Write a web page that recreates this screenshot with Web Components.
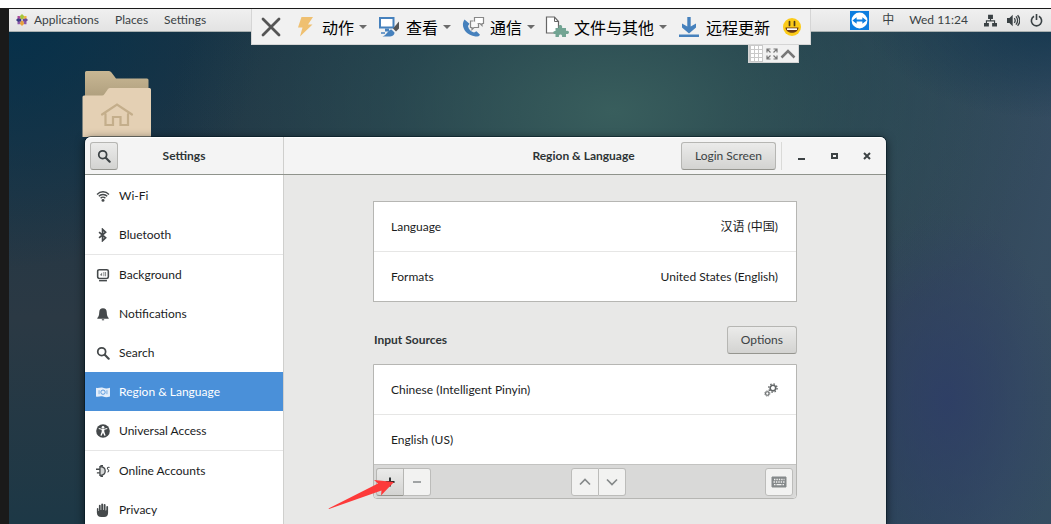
<!DOCTYPE html>
<html lang="en">
<head>
<meta charset="utf-8">
<title>Settings</title>
<style>
  body {
    margin: 0;
    background: #ffffff;
    font-family: Lato, "Noto Sans CJK SC", sans-serif;
    font-size: 12px;
    line-height: 16px;
    color: #1c1f20;
  }
</style>
</head>
<body>
<x-desktop></x-desktop>

<script>
const ICONS = {
  search: `<svg viewBox="0 0 16 16"><circle cx="6.5" cy="6.5" r="4.500" fill="none" stroke="currentColor" stroke-width="2"/><path d="M10 10l4.500 4.500" stroke="currentColor" stroke-width="2.400" stroke-linecap="round"/></svg>`,
  wifi: `<svg viewBox="0 0 16 16" fill="none" stroke="currentColor" stroke-width="1.6"><path d="M1.2 6.2c3.8-4 9.8-4 13.6 0"/><path d="M3.2 8.4c2.7-2.8 6.900-2.800 9.600 0"/><path d="M5.300 10.500c1.500-1.600 3.900-1.600 5.400 0"/><circle cx="8" cy="13" r="1.700" fill="currentColor" stroke="none"/></svg>`,
  bluetooth: `<svg viewBox="0 0 16 16" fill="none" stroke="currentColor" stroke-width="1.900"><path d="M3.500 4.800l7.500 6.400L7.500 14.500v-13L11 4.800 3.500 11.200"/></svg>`,
  background: `<svg viewBox="0 0 16 16"><rect x="1.900" y="1.900" width="12.200" height="10" rx="1.800" fill="none" stroke="currentColor" stroke-width="1.800"/><path d="M4.500 8l2.500-3v4zM8.500 4.500h1v5h-1zM10.500 4.500h1v5h-1z" fill="currentColor" opacity=".75"/><path d="M3.500 14.500h9" stroke="currentColor" stroke-width="1.600"/></svg>`,
  bell: `<svg viewBox="0 0 16 16" fill="currentColor"><path d="M8 1.500c-2.800 0-4.200 1.900-4.300 4.500-.1 3.500-.7 5-2.200 6.500v1h13v-1c-1.500-1.500-2.100-3-2.200-6.500C12.200 3.400 10.800 1.500 8 1.500z"/><path d="M6.700 14h2.600v1.200H6.700z"/></svg>`,
  region: `<svg viewBox="0 0 16 16"><path d="M0 3.200c3 1 5-1 8 0s5 .8 8 0v10c-3 .8-5 1-8 0s-5 .8-8 0z" fill="currentColor" opacity=".85"/><circle cx="8" cy="8.200" r="2.500" fill="none" stroke="#4a90d9" stroke-width="1"/><path d="M3.500 6v4.500M12.500 6v4.500" stroke="#4a90d9" stroke-width=".8"/></svg>`,
  access: `<svg viewBox="0 0 16 16"><circle cx="8" cy="8" r="7.800" fill="currentColor"/><circle cx="8" cy="3.700" r="1.500" fill="#fff"/><path d="M3 5.700l3.500.9v2.200L5 13l1.400.5L8 10l1.600 3.500L11 13 9.500 8.800V6.600l3.500-.9-.3-1-3.200.8h-3L3.300 4.700z" fill="#fff"/></svg>`,
  accounts: `<svg viewBox="0 0 16 16" fill="none" stroke="currentColor"><path d="M4.500 3v10c4 0 6-2 6-5s-2-5-6-5z" fill="#d4d6d6" stroke-width="1.500"/><path d="M0 6h4.500M1 10.200h3.500M5 2h3M5 14h3" stroke-width="1.500"/><path d="M15.500 4c-2-.8-3.200.8-2 2s2 2-.3 3.500" stroke-width="1.200"/></svg>`,
  hand: `<svg viewBox="0 0 16 16" fill="currentColor"><path d="M1 6.500c0-1 1.700-1 1.700 0V9h.6V2.800c0-1.200 2-1.200 2 0V8h.7V1.500c0-1.200 2.100-1.200 2.100 0V8h.7V2c0-1.200 2.100-1.200 2.100 0v6.500h.7l.2-1V4.300c0-1.100 2-1.100 2 0V11c0 3-1.500 5-4.500 5H6c-3 0-5-2-5-5z"/></svg>`,
  gears: `<svg viewBox="0 0 16 16" fill="none" stroke="currentColor"><circle cx="10.200" cy="5.800" r="3.200" stroke-width="1.800"/><circle cx="10.200" cy="5.800" r="4.800" stroke-width="1.500" stroke-dasharray="1.700 2.070"/><circle cx="3.800" cy="12" r="2" stroke-width="1.300"/><circle cx="3.800" cy="12" r="3" stroke-width="1" stroke-dasharray="1.200 1.150"/></svg>`,
  keyboard: `<svg viewBox="0 0 16 16"><path d="M1 3h14v10H1z" fill="#85898a" stroke="currentColor"/><path d="M3 5.500h10.500M2.500 8h11" stroke="#f2f2f1" stroke-width="1.300" stroke-dasharray="1.400 1"/><path d="M3 10.700h1.500M5.500 10.700h5M11.500 10.700h1.500" stroke="#f2f2f1" stroke-width="1.300"/></svg>`,
  plus: `<svg viewBox="0 0 16 16"><path d="M8 3.500v9M3.500 8h9" stroke="currentColor" stroke-width="1.800"/></svg>`,
  minus: `<svg viewBox="0 0 16 16"><path d="M4 8h8" stroke="currentColor" stroke-width="1.500"/></svg>`,
  up: `<svg viewBox="0 0 16 16"><path d="M3 10.500L8 5.500l5 5" fill="none" stroke="currentColor" stroke-width="1.700"/></svg>`,
  down: `<svg viewBox="0 0 16 16"><path d="M3 5.500l5 5 5-5" fill="none" stroke="currentColor" stroke-width="1.700"/></svg>`,
  minimize: `<svg viewBox="0 0 16 16"><path d="M5 11h7" stroke="currentColor" stroke-width="2"/></svg>`,
  maximize: `<svg viewBox="0 0 16 16"><path d="M6 6h5v4H6z" fill="none" stroke="currentColor" stroke-width="2"/></svg>`,
  close: `<svg viewBox="0 0 16 16"><path d="M5 5l6 6M11 5l-6 6" stroke="currentColor" stroke-width="2"/></svg>`,
  apps: `<svg viewBox="0 0 16 16"><path d="M8 0l3 3-1.500 4h-3L5 3z" fill="#a5c63b"/><path d="M16 8l-3 3-4-1.500v-3L13 5z" fill="#6b4a9a"/><path d="M8 16l-3-3 1.500-4h3l1.500 4z" fill="#e8a33d"/><path d="M0 8l3-3 4 1.500v3L3 11z" fill="#3c3a86"/><path d="M11 2.500h3v3l-4 1z" fill="#f0b240"/><path d="M2 2.500h3l1 4-4-1z" fill="#a94a97"/><path d="M2 13.500v-3l4-1-1 4zM14 13.500h-3l-1-4 4 1z" fill="#8a57a8"/></svg>`,
  network: `<svg viewBox="0 0 16 16" fill="currentColor"><path d="M5 1h6v5H5zM0 11h6v4.500H0zM10 11h6v4.500h-6z"/><path d="M8 6v2.500M3 11.500v-3h10v3" fill="none" stroke="currentColor" stroke-width="1.400"/></svg>`,
  volume: `<svg viewBox="0 0 16 16"><path d="M0 5h3l4-4v14l-4-4H0z" fill="currentColor"/><path d="M9 5c1.300 1.800 1.300 4.200 0 6M11 3c2.500 3 2.500 7 0 10M13 1.500c3.500 4 3.500 9 0 13" fill="none" stroke="currentColor" stroke-width="1.600"/></svg>`,
  power: `<svg viewBox="0 0 16 16" fill="none" stroke="currentColor" stroke-width="2"><path d="M5 2.800a6.300 6.300 0 1 0 6 0M8 0v7.500"/></svg>`,
  teamviewer: `<svg viewBox="0 0 18 18"><path d="M0 0h18v18H0z" fill="#0d7ddf"/><circle cx="9" cy="9" r="7.500" fill="#fff"/><path d="M2.300 9l4-3v2h5.400V6l4 3-4 3v-2H6.300v2z" fill="#0d7ddf"/></svg>`,
  cross: `<svg viewBox="0 0 24 24"><path d="M4 4l16 16M20 4L4 20" stroke="#555" stroke-width="2.800" stroke-linecap="round"/></svg>`,
  bolt: `<svg viewBox="0 0 24 24"><path d="M8.500 2H20l-5 7.500h4.500L7 21.500l2.500-9H5z" fill="#efc071"/></svg>`,
  screen: `<svg viewBox="0 0 24 24"><path d="M3 3h13.500v9.500H3z" fill="#fff" stroke="#4681bd" stroke-width="2"/><path d="M8 13.500h4v3H8z" fill="#4681bd"/><path d="M4 18h4" stroke="#4681bd" stroke-width="1.500"/><path d="M22 6.500v7l-3 3-3-3z" fill="#555"/><path d="M14.500 14.500l3 3c0 3-3 4.500-7 4H5.500c2.500-1 3-2 4.500-3.500s2.500-3.500 4.500-3.500z" fill="#4681bd"/></svg>`,
  phone: `<svg viewBox="0 0 24 24"><path d="M3.500 4.500C-.500 10 3 20 14.500 21.500c2.500 0 4-.500 4.500-1.800l-3.500-3.400-2.500 1.200c-3.500-.700-5.500-3.500-6-6.500l1.500-2.200z" fill="#4681bd"/><path d="M13.500 2.500h9V8.500h-1.500v2L19 8.500h-5.500z" fill="#fff" stroke="#888" stroke-width="1.200"/><path d="M12.500 6h-3v6.500h1.500v2l2-2h4.500V9" fill="#f8f8f8" stroke="#888" stroke-width="1.200"/></svg>`,
  files: `<svg viewBox="0 0 24 24"><path d="M1.500 2h8l4 4.500V18h-12z" fill="#fff" stroke="#666" stroke-width="1.200"/><path d="M9.500 2v4.500h4" fill="none" stroke="#666"/><path d="M10.500 13h3.200c-1.500-4 4.600-4 3.300 0h4v3c4-1.500 4 4 0 3v3h-4c1-3.500-4-3.500-3 0h-3.500v-3c-3 .5-3-3.500 0-3z" fill="#72a493"/></svg>`,
  download: `<svg viewBox="0 0 24 24" fill="#4681bd"><path d="M10.300 2h3.400v9.500l5.300-3v4L12 18.500 5 12.500v-4l5.300 3zM2 19.500h20V22H2z"/></svg>`,
  smiley: `<svg viewBox="0 0 24 24"><circle cx="12" cy="12" r="9" fill="#fccb18"/><path d="M9.500 6.500v4M14.500 6.500v4" stroke="#4b3a1a" stroke-width="1.700" stroke-linecap="round"/><path d="M5.500 12.500h13c-.5 7-12.500 7-13 0z" fill="#6a3a17"/><path d="M7 13.300h10v1.700H7z" fill="#fff"/></svg>`,
  grip: `<svg viewBox="0 0 14 17"><path d="M0 0h14v17H0z" fill="#c9c9c9"/><path d="M3.500 1v16M7.500 1v16M11.500 1v16" stroke="#fff" stroke-width="3" stroke-dasharray="3 1"/></svg>`,
  expand: `<svg viewBox="0 0 16 16" fill="none" stroke="#777" stroke-width="1.200"><path d="M3 6.500V3h3.500M3 3l3.500 3.500M9.500 3H13v3.500M13 3L9.500 6.500M3 9.500V13h3.500M3 13l3.500-3.500M13 9.500V13H9.500M13 13L9.500 9.500"/></svg>`,
  chevron: `<svg viewBox="0 0 16 16"><path d="M1.500 11.500L8 5l6.500 6.500" fill="none" stroke="#777" stroke-width="2.500"/></svg>`,
};

class XIcon extends HTMLElement {
  constructor() {
    super();
    this.attachShadow({ mode: "open" });
  }

  connectedCallback() {
    this.shadowRoot.innerHTML = `
      <style>
        :host { display: block; flex: none; width: var(--icon-size, 16px); height: var(--icon-size, 16px); }
        svg { display: block; width: 100%; height: 100%; }
      </style>
      ${ICONS[this.getAttribute("name")] || ""}
    `;
  }
}
customElements.define("x-icon", XIcon);

// registers an element whose shadow root is a clone of the given markup
function define(name, html) {
  const template = document.createElement("template");
  template.innerHTML = html;

  customElements.define(name, class extends HTMLElement {
    constructor() {
      super();
      this.attachShadow({ mode: "open" });
      this.shadowRoot.appendChild(template.content.cloneNode(true));
      const button = this.shadowRoot.querySelector("button, a");
      if (button && this.getAttribute("label")) {
        button.setAttribute("aria-label", this.getAttribute("label"));
      }
    }
  });
}

define("x-button", `
  <style>
    :host { display: block; flex: none; }
    button {
      box-sizing: border-box;
      display: flex;
      align-items: center;
      justify-content: center;
      min-width: 28px;
      height: 28px;
      margin: 0;
      padding: 0 var(--button-padding, 5px);
      border: 1px solid #b6b6b3;
      border-bottom-color: #95958f;
      border-radius: var(--button-radius, 3px);
      background: linear-gradient(#ebebea, #d3d3d1);
      font: inherit;
      color: var(--button-color, #3c4244);
    }
    :host([flat]) button { background: #f2f2f1; border-color: #bcbcba; }
    :host([joined]) button { border-left: 0; min-width: 27px; }
    :host([window]) button { background: none; border: 0; min-width: 33px; padding: 0; }
  </style>
  <button type="button"><slot></slot></button>
`);

define("x-menu-button", `
  <style>
    :host { display: block; }
    button {
      display: flex;
      align-items: center;
      height: var(--menu-height, 22px);
      margin: 0;
      padding: 0;
      border: 0;
      background: none;
      font: inherit;
      color: inherit;
      white-space: nowrap;
    }
  </style>
  <button type="button"><slot></slot></button>
`);

define("x-top-bar", `
  <style>
    :host {
      display: flex;
      align-items: center;
      justify-content: space-between;
      height: 22px;
      padding: 0 8px 0 7px;
      border-bottom: 1px solid #a9b0b0;
      background: linear-gradient(#f0f0f0, #e3e3e3);
      color: #3a4144;
    }
    nav, .status { display: flex; align-items: center; }
    nav { gap: 16px; }
    .apps { --icon-size: 12px; margin-right: 6px; }
    .status { gap: 10px; --icon-size: 13px; }
    .tv { --icon-size: 19px; }
    .clock { margin: 0 6px 0 5px; }
    .input { margin-left: 3px; }
  </style>
  <nav>
    <x-menu-button><x-icon class="apps" name="apps"></x-icon>Applications</x-menu-button>
    <x-menu-button>Places</x-menu-button>
    <x-menu-button>Settings</x-menu-button>
  </nav>
  <div class="status">
    <x-menu-button label="TeamViewer"><x-icon class="tv" name="teamviewer"></x-icon></x-menu-button>
    <x-menu-button class="input">中</x-menu-button>
    <x-menu-button class="clock">Wed 11:24</x-menu-button>
    <x-menu-button label="Network"><x-icon name="network"></x-icon></x-menu-button>
    <x-menu-button label="Volume"><x-icon name="volume"></x-icon></x-menu-button>
    <x-menu-button label="Power"><x-icon name="power"></x-icon></x-menu-button>
  </div>
`);

define("x-remote-item", `
  <style>
    :host { display: block; --icon-size: 24px; }
    button {
      display: flex;
      align-items: center;
      gap: 5px;
      height: 35px;
      margin: 0;
      padding: 0;
      border: 0;
      background: none;
      font: inherit;
      color: #000000;
      white-space: nowrap;
    }
    :host([menu]) button::after {
      content: "";
      border: 4px solid transparent;
      border-top-color: #6b6b6b;
      border-bottom: 0;
    }
  </style>
  <button type="button"><slot></slot></button>
`);

define("x-remote-bar", `
  <style>
    :host {
      display: flex;
      flex-direction: column;
      align-items: flex-end;
      font-family: "Noto Sans CJK SC", sans-serif;
      font-size: 16px;
      line-height: 24px;
    }
    .bar {
      display: flex;
      gap: 10px;
      padding: 0 6px 0 7px;
      border: 1px solid #d5d5d5;
      border-top: 0;
      background: #f1f1f1;
    }
    .tab {
      display: flex;
      align-items: center;
      height: 17px;
      margin-right: 12px;
      padding-right: 2px;
      border: 1px solid #d5d5d5;
      border-top: 0;
      background: #f1f1f1;
      --menu-height: 17px;
    }
    .grip { width: 14px; height: 17px; }
    .expand { margin-left: 1px; }
  </style>
  <div class="bar">
    <x-remote-item label="关闭"><x-icon name="cross"></x-icon></x-remote-item>
    <x-remote-item menu><x-icon name="bolt"></x-icon>动作</x-remote-item>
    <x-remote-item menu><x-icon name="screen"></x-icon>查看</x-remote-item>
    <x-remote-item menu><x-icon name="phone"></x-icon>通信</x-remote-item>
    <x-remote-item menu><x-icon name="files"></x-icon>文件与其他</x-remote-item>
    <x-remote-item><x-icon name="download"></x-icon>远程更新</x-remote-item>
    <x-remote-item label="反馈"><x-icon name="smiley"></x-icon></x-remote-item>
  </div>
  <div class="tab">
    <x-icon class="grip" name="grip"></x-icon>
    <x-menu-button class="expand" label="全屏"><x-icon name="expand"></x-icon></x-menu-button>
    <x-menu-button label="收起"><x-icon name="chevron"></x-icon></x-menu-button>
  </div>
`);

define("x-home-folder", `
  <style>
    :host { display: block; width: 70px; }
    svg { display: block; width: 100%; }
  </style>
  <svg viewBox="0 0 70 66" role="img" aria-label="Home">
    <defs>
      <linearGradient id="back" x1="0" y1="0" x2="0" y2="1">
        <stop offset="0" stop-color="#c8b794"/>
        <stop offset="1" stop-color="#a89877"/>
      </linearGradient>
    </defs>
    <path d="M3 1.500q0-1.500 1.500-1.500H27q1.500 0 2.500 1.500L34 7.500h31q1.500 0 1.500 1.500v25H3z" fill="url(#back)"/>
    <path d="M.5 26q0-1.500 1.500-1.500h18q1.500 0 2.500-1.500L26 18q.8-1 2-1h39.500q1.500 0 1.500 1.500V66H.5z" fill="#e4d0b4"/>
    <path d="M20 43.500l15-10 15 10M23.500 43v11H31v-8h7.500v8H46V43" fill="none" stroke="#c4ae8b" stroke-width="2.200" stroke-linecap="round"/>
  </svg>
`);

define("x-header-bar", `
  <style>
    :host {
      display: flex;
      flex: none;
      height: 37px;
      border-bottom: 1px solid #8f938c;
      border-radius: 6px 6px 0 0;
      background: #f4f4f4;
      box-shadow: inset 0 1px #ffffff;
    }
    h1, h2 {
      margin: 0;
      font-size: 12px;
      font-weight: 700;
      line-height: 16px;
      color: #2e3436;
      white-space: nowrap;
    }
    .side, .main { display: grid; align-items: center; }
    .side {
      box-sizing: border-box;
      flex: none;
      width: 199px;
      grid-template-columns: 28px 1fr 28px;
      padding: 0 5px;
      border-right: 1px solid #cfcfcd;
      text-align: center;
    }
    .side x-icon { --icon-size: 14px; }
    .main { flex: 1; grid-template-columns: 1fr auto 1fr; padding-right: 3px; }
    .main h1 { grid-column: 2; }
    .controls { display: flex; justify-content: flex-end; align-items: center; color: #1e2426; }
    .login { --button-padding: 13px; }
    .line { width: 1px; height: 28px; margin: 0 2px 0 5px; background: #dadad8; }
  </style>
  <div class="side">
    <x-button label="Search"><x-icon name="search"></x-icon></x-button>
    <h2>Settings</h2>
  </div>
  <div class="main">
    <h1>Region &amp; Language</h1>
    <div class="controls">
      <x-button class="login">Login Screen</x-button>
      <span class="line"></span>
      <x-button window label="Minimize"><x-icon name="minimize"></x-icon></x-button>
      <x-button window label="Maximize"><x-icon name="maximize"></x-icon></x-button>
      <x-button window label="Close"><x-icon name="close"></x-icon></x-button>
    </div>
  </div>
`);

define("x-side-item", `
  <style>
    :host { display: block; }
    :host([first]) { border-top: 1px solid #e6e6e6; }
    a {
      display: flex;
      align-items: center;
      gap: 9px;
      height: 39px;
      padding-left: 11px;
      color: #1a1c1d;
      text-decoration: none;
    }
    ::slotted(x-icon) { --icon-size: 14px; color: #45494b; }
    :host([selected]) a { background: #4a90d9; color: #ffffff; }
    :host([selected]) ::slotted(x-icon) { color: #ffffff; }
  </style>
  <a href="#"><slot></slot></a>
`);

define("x-side-bar", `
  <style>
    :host { display: block; padding-top: 1px; background: #ffffff; border-right: 1px solid #cfcfcd; }
  </style>
  <nav>
    <x-side-item><x-icon name="wifi"></x-icon>Wi-Fi</x-side-item>
    <x-side-item><x-icon name="bluetooth"></x-icon>Bluetooth</x-side-item>
    <x-side-item first><x-icon name="background"></x-icon>Background</x-side-item>
    <x-side-item><x-icon name="bell"></x-icon>Notifications</x-side-item>
    <x-side-item><x-icon name="search"></x-icon>Search</x-side-item>
    <x-side-item selected><x-icon name="region"></x-icon>Region &amp; Language</x-side-item>
    <x-side-item><x-icon name="access"></x-icon>Universal Access</x-side-item>
    <x-side-item first><x-icon name="accounts"></x-icon>Online Accounts</x-side-item>
    <x-side-item><x-icon name="hand"></x-icon>Privacy</x-side-item>
  </nav>
`);

define("x-list", `
  <style>
    :host { display: block; border: 1px solid #b6b6b3; background: #ffffff; }
    :host([toolbar]) { border-radius: 0 0 4px 4px; }
  </style>
  <slot></slot>
`);

define("x-row", `
  <style>
    :host { display: block; }
    :host([next]) { border-top: 1px solid #e6e6e5; }
    button {
      display: flex;
      align-items: center;
      justify-content: space-between;
      width: 100%;
      height: 49px;
      margin: 0;
      padding: 0 18px 0 17px;
      border: 0;
      background: none;
      font: inherit;
      color: #1a1c1d;
    }
  </style>
  <button type="button"><slot></slot><slot name="end"></slot></button>
`);

define("x-source-tools", `
  <style>
    :host {
      position: relative;
      display: flex;
      align-items: center;
      justify-content: space-between;
      height: 33px;
      padding: 0 3px 0 2px;
      border-top: 1px solid #c3c3c1;
      border-radius: 0 0 4px 4px;
      background: #d9d9d8;
      color: #8b8e8f;
      --button-color: #85898a;
    }
    .pair { display: flex; }
    .left { --button-radius: 3px 0 0 3px; }
    .right { --button-radius: 0 3px 3px 0; }
    .add { --button-color: #1e2426; }
    .arrow { position: absolute; left: -46px; top: 13px; width: 68px; height: 32px; }
  </style>
  <div class="pair">
    <x-button class="left add" label="Add"><x-icon name="plus"></x-icon></x-button>
    <x-button class="right" flat joined label="Remove"><x-icon name="minus"></x-icon></x-button>
  </div>
  <div class="pair">
    <x-button class="left" flat label="Move up"><x-icon name="up"></x-icon></x-button>
    <x-button class="right" flat joined label="Move down"><x-icon name="down"></x-icon></x-button>
  </div>
  <x-button flat label="Show layout"><x-icon name="keyboard"></x-icon></x-button>
  <svg class="arrow" viewBox="0 0 68 32"><path d="M66 4L46 2l4 3.500L.5 30.500 1 31l52.500-18.500-.5 5z" fill="#fd3a3a"/></svg>
`);

define("x-region-panel", `
  <style>
    :host { display: block; padding: 26px 89px; background: #e8e8e7; }
    .heading { display: flex; align-items: center; justify-content: space-between; margin: 24px 0 10px; }
    h2 { margin: 0 1px; font-size: 12px; font-weight: 700; line-height: 16px; color: #2e3436; }
    .options { --button-padding: 13px; }
    .gears { --icon-size: 14px; color: #626667; }
  </style>
  <x-list>
    <x-row>Language<span slot="end">汉语 (中国)</span></x-row>
    <x-row next>Formats<span slot="end">United States (English)</span></x-row>
  </x-list>
  <div class="heading">
    <h2>Input Sources</h2>
    <x-button class="options">Options</x-button>
  </div>
  <x-list toolbar>
    <x-row>Chinese (Intelligent Pinyin)<x-icon class="gears" slot="end" name="gears"></x-icon></x-row>
    <x-row next>English (US)</x-row>
    <x-source-tools></x-source-tools>
  </x-list>
`);

define("x-settings-window", `
  <style>
    :host {
      display: flex;
      flex-direction: column;
      border-radius: 6px 6px 0 0;
      box-shadow: 0 0 0 1px rgba(0, 20, 30, .5), 0 2px 9px 1px rgba(0, 0, 0, .5);
    }
    .body { display: flex; flex: 1; }
    x-side-bar { flex: none; width: 198px; }
    x-region-panel { flex: 1; }
  </style>
  <x-header-bar></x-header-bar>
  <div class="body">
    <x-side-bar></x-side-bar>
    <x-region-panel></x-region-panel>
  </div>
`);

define("x-desktop", `
  <style>
    :host { display: flex; box-sizing: border-box; height: 100vh; padding-top: 8px; overflow: hidden; }
    .screen {
      position: relative;
      flex: 1;
      border-top: 1px solid #1a1a1a;
      border-left: 9px solid #1a1a1a;
      overflow: hidden;
      background:
        radial-gradient(ellipse 190px 110px at 100% 0%, rgba(16, 52, 76, .9), transparent),
        radial-gradient(ellipse 440px 260px at 58% 20%, rgba(58, 96, 94, .95), rgba(50, 88, 90, .5) 50%, transparent),
        radial-gradient(ellipse 120px 190px at 90% 76%, rgba(46, 62, 102, .9), transparent),
        linear-gradient(100deg, transparent 65%, rgba(58, 82, 104, .8) 95%),
        radial-gradient(ellipse 260px 260px at 0% 0%, #05304a, transparent),
        linear-gradient(#1a3445, #2b3944 60%, #1d3846);
    }
    x-remote-bar { position: absolute; top: 0; left: 242px; }
    x-home-folder { position: absolute; top: 62px; left: 73px; }
    x-settings-window { position: absolute; top: 128px; left: 76px; right: 165px; bottom: 0; }
  </style>
  <div class="screen">
    <x-top-bar></x-top-bar>
    <x-home-folder></x-home-folder>
    <x-settings-window></x-settings-window>
    <x-remote-bar></x-remote-bar>
  </div>
`);
</script>
</body>
</html>
